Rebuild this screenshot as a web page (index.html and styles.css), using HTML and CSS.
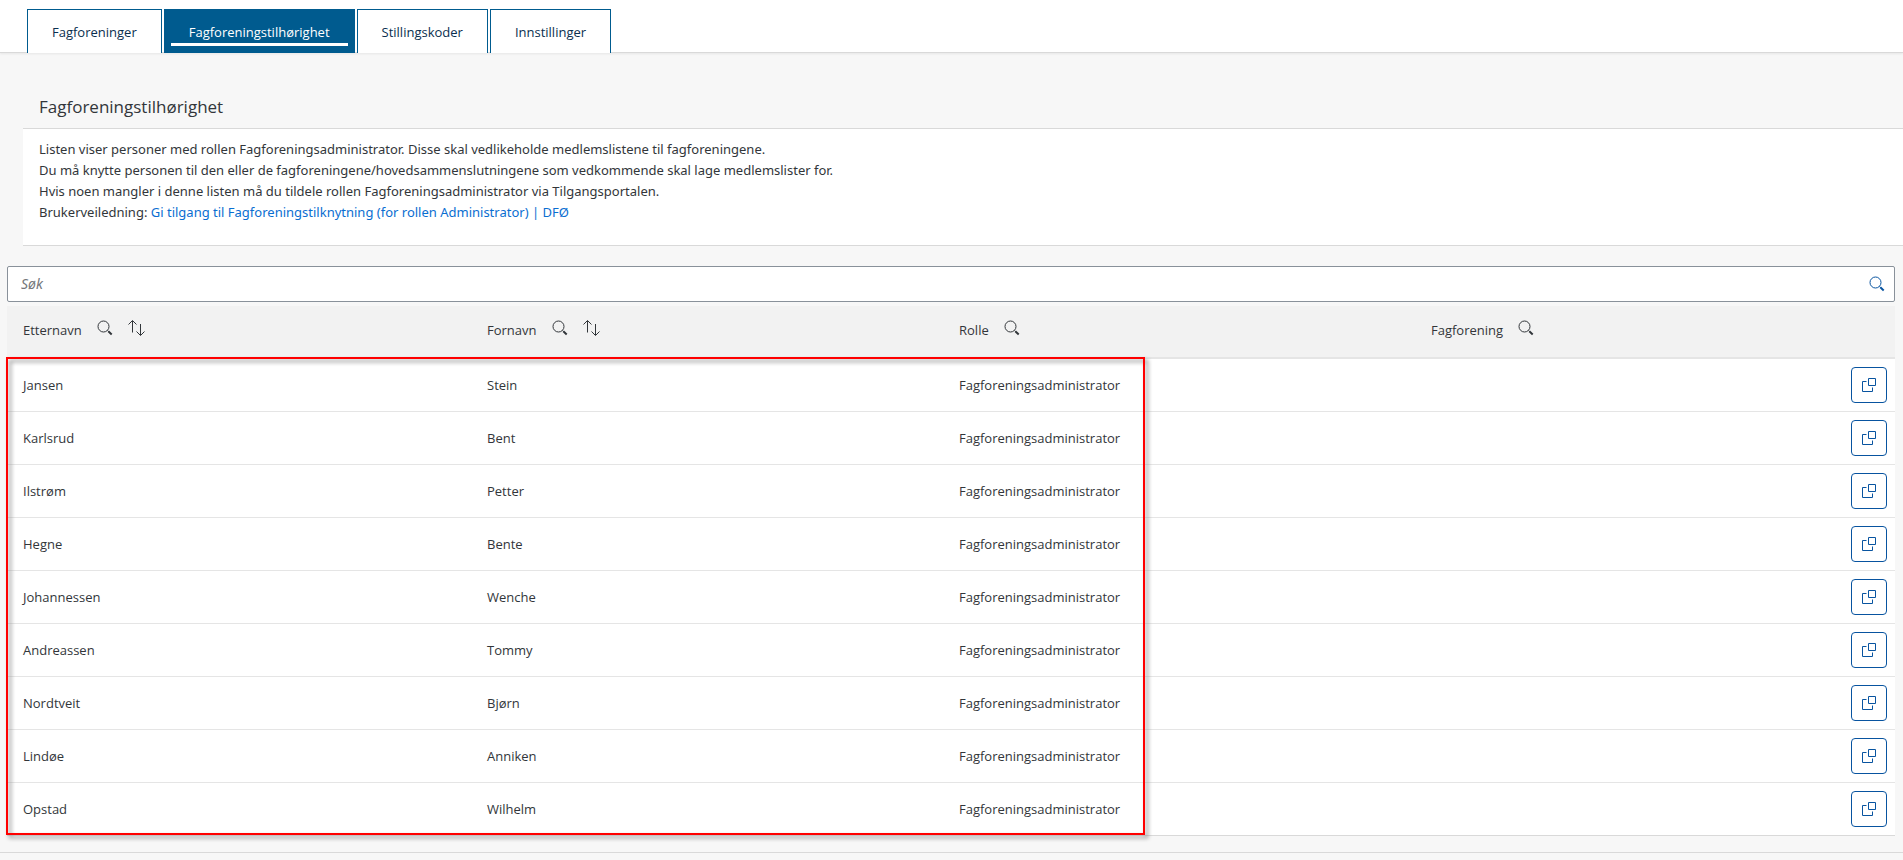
FILE: index.html
```html
<!DOCTYPE html>
<html lang="no">
<head>
<meta charset="utf-8">
<title>Fagforeningstilhørighet</title>
<link rel="stylesheet" href="styles.css">
</head>
<body>
<svg class="sprite" aria-hidden="true">
  <symbol id="search" viewBox="0 0 16 16"><circle cx="6.5" cy="6.5" r="5.5"/><path d="M10.5 10.5l1 1"/><path class="handle" d="M11.3 11.3l3.4 3.2"/></symbol>
  <symbol id="sort" viewBox="0 0 18 16"><path d="M4.500 12.500V.8M.500 4.500l4-4 4 4M12.500 4v11.200M8.500 11.500l4 4 4-4"/></symbol>
  <symbol id="copy" viewBox="0 0 16 16"><path d="M7.500 1.500h7v7h-7zM5.500 4.500h-4v10h10v-4"/></symbol>
</svg>
<nav class="tabs">
  <button class="tab" type="button">Fagforeninger</button>
  <button class="tab active" type="button" aria-current="page">Fagforeningstilhørighet</button>
  <button class="tab" type="button">Stillingskoder</button>
  <button class="tab" type="button">Innstillinger</button>
</nav>
<main>
  <section class="intro">
    <h1>Fagforeningstilhørighet</h1>
    <div class="panel">
      <p>Listen viser personer med rollen Fagforeningsadministrator. Disse skal vedlikeholde medlemslistene til fagforeningene.</p>
      <p>Du må knytte personen til den eller de fagforeningene/hovedsammenslutningene som vedkommende skal lage medlemslister for.</p>
      <p>Hvis noen mangler i denne listen må du tildele rollen Fagforeningsadministrator via Tilgangsportalen.</p>
      <p>Brukerveiledning: <a href="#">Gi tilgang til Fagforeningstilknytning (for rollen Administrator) | DFØ</a></p>
    </div>
  </section>
  <form class="search">
    <input type="search" placeholder="Søk" aria-label="Søk">
    <button type="button" aria-label="Søk"><svg class="icon"><use href="#search"/></svg></button>
  </form>
  <div class="list">
    <table>
      <thead>
        <tr>
          <th class="first"><div class="head">Etternavn<button type="button" aria-label="Søk i etternavn"><svg class="icon"><use href="#search"/></svg></button><button type="button" aria-label="Sorter etternavn"><svg class="icon sort"><use href="#sort"/></svg></button></div></th>
          <th class="mid"><div class="head">Fornavn<button type="button" aria-label="Søk i fornavn"><svg class="icon"><use href="#search"/></svg></button><button type="button" aria-label="Sorter fornavn"><svg class="icon sort"><use href="#sort"/></svg></button></div></th>
          <th class="mid"><div class="head">Rolle<button type="button" aria-label="Søk i rolle"><svg class="icon"><use href="#search"/></svg></button></div></th>
          <th><div class="head">Fagforening<button type="button" aria-label="Søk i fagforening"><svg class="icon"><use href="#search"/></svg></button></div></th>
        </tr>
      </thead>
      <tbody>
        <tr><td>Jansen</td><td>Stein</td><td>Fagforeningsadministrator</td><td class="action"><button class="open" type="button" aria-label="Åpne"><svg class="icon"><use href="#copy"/></svg></button></td></tr>
        <tr><td>Karlsrud</td><td>Bent</td><td>Fagforeningsadministrator</td><td class="action"><button class="open" type="button" aria-label="Åpne"><svg class="icon"><use href="#copy"/></svg></button></td></tr>
        <tr><td>Ilstrøm</td><td>Petter</td><td>Fagforeningsadministrator</td><td class="action"><button class="open" type="button" aria-label="Åpne"><svg class="icon"><use href="#copy"/></svg></button></td></tr>
        <tr><td>Hegne</td><td>Bente</td><td>Fagforeningsadministrator</td><td class="action"><button class="open" type="button" aria-label="Åpne"><svg class="icon"><use href="#copy"/></svg></button></td></tr>
        <tr><td>Johannessen</td><td>Wenche</td><td>Fagforeningsadministrator</td><td class="action"><button class="open" type="button" aria-label="Åpne"><svg class="icon"><use href="#copy"/></svg></button></td></tr>
        <tr><td>Andreassen</td><td>Tommy</td><td>Fagforeningsadministrator</td><td class="action"><button class="open" type="button" aria-label="Åpne"><svg class="icon"><use href="#copy"/></svg></button></td></tr>
        <tr><td>Nordtveit</td><td>Bjørn</td><td>Fagforeningsadministrator</td><td class="action"><button class="open" type="button" aria-label="Åpne"><svg class="icon"><use href="#copy"/></svg></button></td></tr>
        <tr><td>Lindøe</td><td>Anniken</td><td>Fagforeningsadministrator</td><td class="action"><button class="open" type="button" aria-label="Åpne"><svg class="icon"><use href="#copy"/></svg></button></td></tr>
        <tr><td>Opstad</td><td>Wilhelm</td><td>Fagforeningsadministrator</td><td class="action"><button class="open" type="button" aria-label="Åpne"><svg class="icon"><use href="#copy"/></svg></button></td></tr>
      </tbody>
    </table>
    <div class="marker"></div>
  </div>
</main>
</body>
</html>
```
FILE: styles.css
```css
* { box-sizing: border-box; }
body {
  margin: 0;
  background: #f7f7f7;
  color: #32363a;
  font: 13px/21px "Noto Sans", "Open Sans", sans-serif;
}
button, input { font: inherit; color: inherit; }
.sprite { position: absolute; width: 0; height: 0; }
.icon {
  display: block;
  width: 16px;
  height: 16px;
  fill: none;
  stroke: currentColor;
  stroke-width: 1;
  overflow: visible;
}
.icon.sort { width: 18px; }
.handle { stroke-width: 2; }

.tabs, h1, table { font-family: "Open Sans", "Noto Sans", sans-serif; }
.tabs {
  display: flex;
  gap: 2px;
  padding: 9px 27px 0;
  background: #fff;
  box-shadow: inset 0 -1px #d9d9d9, 0 1px 2px #e6e6e6;
}
.tab {
  height: 44px;
  padding: 2px 24px 0;
  border: 1px solid #005b8f;
  border-bottom: 0;
  background: #fff;
  color: #0a2f4f;
}
.tab.active {
  position: relative;
  background: #005b8f;
  color: #fff;
  font-weight: 500;
}
.tab.active::after {
  content: "";
  position: absolute;
  left: 6px;
  right: 6px;
  bottom: 7px;
  height: 3px;
  background: #fff;
}

.intro { padding: 31px 0 0 23px; }
h1 {
  margin: 0;
  padding: 2px 16px 0;
  font-size: 17px;
  font-weight: 400;
  line-height: 42px;
}
.panel {
  padding: 10px 16px 22px;
  border-top: 1px solid #d9d9d9;
  border-bottom: 1px solid #d9d9d9;
  background: #fff;
}
p { margin: 0; }
a { color: #0a6ed1; text-decoration: none; }

.search {
  display: flex;
  align-items: center;
  height: 36px;
  margin: 20px 8px 4px 7px;
  padding-right: 9px;
  border: 1px solid #89919a;
  border-radius: 2px;
  background: #fff;
}
.search input {
  flex: 1;
  padding: 0 13px;
  border: 0;
  outline: 0;
  background: transparent;
}
.search input::placeholder { color: #74777a; font-size: 14px; font-style: italic; }
.search button, .head button {
  padding: 0;
  border: 0;
  background: none;
}
.search button { color: #0854a0; }

.list { position: relative; margin: 0 8px 16px 7px; }
table {
  width: 100%;
  border-spacing: 0;
  table-layout: fixed;
  background: #fff;
}
th, td { height: 53px; padding: 0 16px; text-align: left; font-weight: 400; }
th { padding-bottom: 2px; background: #f2f2f2; border-bottom: 2px solid #e5e5e5; }
td { border-bottom: 1px solid #e5e5e5; }
tr:last-child td { border-bottom-color: #d9d9d9; }
.first { width: 464px; }
.mid { width: 25%; }
.head { display: flex; align-items: center; gap: 15px; }
.head button { margin-bottom: 5px; }
td.action { padding: 0 8px; }
.open {
  display: grid;
  place-items: center;
  width: 36px;
  height: 36px;
  margin-left: auto;
  padding: 0;
  border: 1px solid #0854a0;
  border-radius: 4px;
  background: #fff;
  color: #0854a0;
}
.marker {
  position: absolute;
  top: 51px;
  bottom: 1px;
  left: -1px;
  width: 1139px;
  border: 2px solid #f00;
  filter: drop-shadow(3px 3px 2px #888);
  pointer-events: none;
}
main { border-bottom: 1px solid #d9d9d9; }
```
